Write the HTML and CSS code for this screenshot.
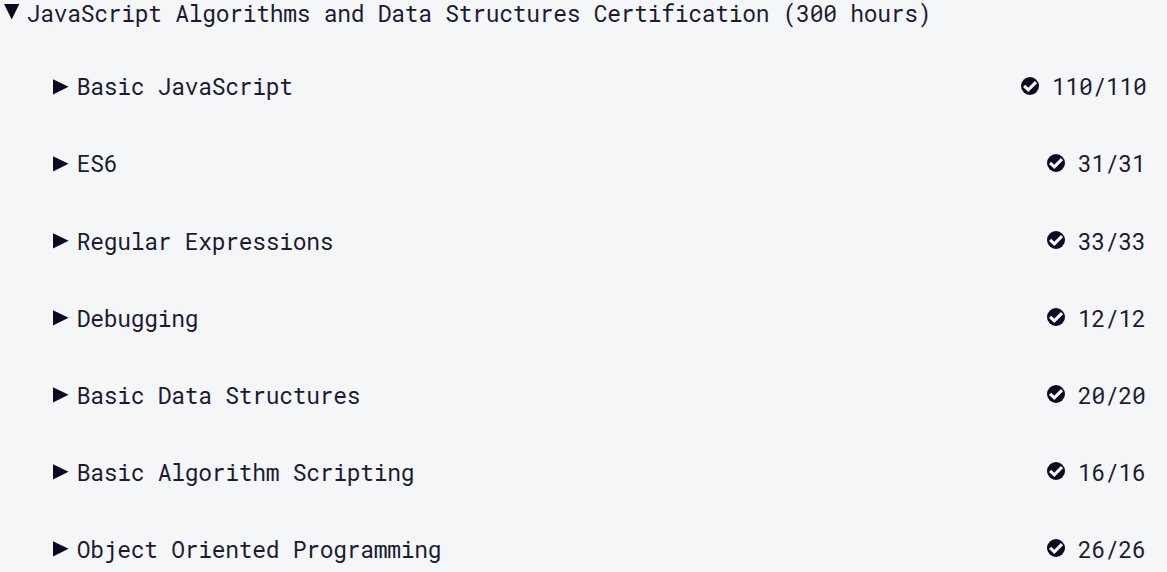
FILE: index.html
```html
<!DOCTYPE html>
<html lang="en">
<head>
<meta charset="utf-8">
<title>Curriculum</title>
<link rel="stylesheet" href="styles.css">
</head>
<body>
<svg class="defs" aria-hidden="true">
  <symbol id="caret" viewBox="0 0 16 16"><path d="M0 0.2 15.6 7.8 0 15.4z" fill="currentColor"/></symbol>
  <symbol id="check" viewBox="0 0 18 18"><circle cx="9" cy="9" r="9" fill="currentColor"/><path d="M3.1 8.9 7.3 12.8 15 5.2" fill="none" stroke="#f5f6f7" stroke-width="3.1"/></symbol>
</svg>
<main class="curriculum">
  <h1 class="title"><svg class="caret open"><use href="#caret"/></svg><span>JavaScript Algorithms and Data Structures Certification (300 hours)</span></h1>
  <ul class="blocks">
    <li class="block"><svg class="caret"><use href="#caret"/></svg><span class="name">Basic JavaScript</span><svg class="check"><use href="#check"/></svg><span class="count long">110/110</span></li>
    <li class="block"><svg class="caret"><use href="#caret"/></svg><span class="name">ES6</span><svg class="check"><use href="#check"/></svg><span class="count">31/31</span></li>
    <li class="block"><svg class="caret"><use href="#caret"/></svg><span class="name">Regular Expressions</span><svg class="check"><use href="#check"/></svg><span class="count">33/33</span></li>
    <li class="block"><svg class="caret"><use href="#caret"/></svg><span class="name">Debugging</span><svg class="check"><use href="#check"/></svg><span class="count">12/12</span></li>
    <li class="block"><svg class="caret"><use href="#caret"/></svg><span class="name">Basic Data Structures</span><svg class="check"><use href="#check"/></svg><span class="count">20/20</span></li>
    <li class="block"><svg class="caret"><use href="#caret"/></svg><span class="name">Basic Algorithm Scripting</span><svg class="check"><use href="#check"/></svg><span class="count">16/16</span></li>
    <li class="block"><svg class="caret"><use href="#caret"/></svg><span class="name">Object Oriented Programming</span><svg class="check"><use href="#check"/></svg><span class="count">26/26</span></li>
  </ul>
</main>
</body>
</html>
```
FILE: styles.css
```css
body {
  margin: 0;
  height: 572px;
  overflow: hidden;
  background: #f5f6f7;
  color: #1b1b32;
  font: 23px/30px "Roboto Mono", "Liberation Mono", monospace;
  letter-spacing: -0.303px;
}
.defs { display: none; }
.title {
  display: flex;
  align-items: center;
  gap: 6.8px;
  height: 26px;
  margin: 0;
  padding-left: 4px;
  font: inherit;
  white-space: pre;
}
.caret {
  flex: none;
  width: 16px;
  height: 16px;
  color: #0a0a23;
}
.open { transform: translateX(-0.5px) rotate(90deg); margin-bottom: 2px; }
.blocks {
  margin: 0;
  padding: 22px 21px 0 53px;
  list-style: none;
}
.block {
  display: flex;
  align-items: center;
  height: 77.1px;
  white-space: pre;
}
.name, .count { padding-bottom: 2px; }
.block:nth-child(n+3) .name,
.block:nth-child(n+3) .count { padding-bottom: 0; }
.name { flex: 1; margin-left: 7.7px; }
.check {
  width: 18px;
  height: 18px;
  margin: 0 13px 1.6px 0;
  color: #0a0a23;
}
.count { width: 68px; }
.long { width: 94px; }
```
